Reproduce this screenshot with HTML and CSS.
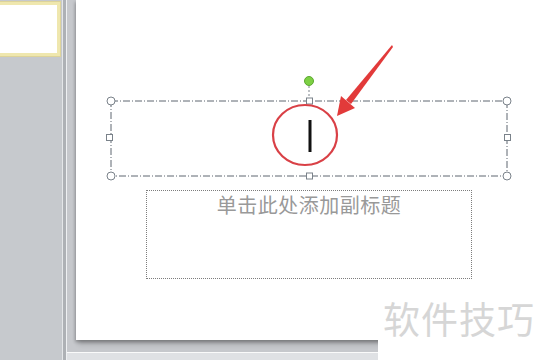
FILE: index.html
```html
<!DOCTYPE html>
<html lang="zh">
<head>
<meta charset="utf-8">
<link rel="stylesheet" href="styles.css">
</head>
<body>
<div class="app">
  <aside class="thumbs">
    <div class="thumb"></div>
  </aside>
  <div class="splitter"></div>
  <main class="editor">
    <section class="slide">
      <div class="subtitle-box">单击此处添加副标题</div>
    </section>
    <div class="gap"></div>
    <div class="notes-edge"></div>
  </main>
</div>
<svg class="overlay" width="540" height="360" viewBox="0 0 540 360">
  <rect x="111" y="101" width="396" height="75" fill="none" stroke="#5f6770" stroke-width="1" stroke-dasharray="7 2 1 2"/>
  <line x1="309" y1="86" x2="309" y2="98" stroke="#7a828a" stroke-dasharray="2 2"/>
  <circle cx="309" cy="81" r="4.5" fill="#7dd044" stroke="#5ca830"/>
  <g fill="#fff" stroke="#7a828a">
    <circle cx="111" cy="101" r="4"/>
    <circle cx="507" cy="101" r="4"/>
    <circle cx="111" cy="176" r="4"/>
    <circle cx="507" cy="176" r="4"/>
    <rect x="106.5" y="134.5" width="6" height="6"/>
    <rect x="504.5" y="134.5" width="6" height="6"/>
    <rect x="306.5" y="98" width="6" height="6"/>
    <rect x="306.5" y="173" width="6" height="6"/>
  </g>
  <rect x="308.5" y="120" width="3" height="32" fill="#111"/>
  <ellipse cx="305" cy="135" rx="32" ry="30" fill="none" stroke="#d94046" stroke-width="2.2"/>
  <polygon points="392,45 393,47 351,104 346,100" fill="#e23a3a"/>
  <polygon points="337,116 341,96 355,108" fill="#e23a3a"/>
</svg>
<div class="watermark">软件技巧</div>
</body>
</html>
```
FILE: styles.css
```css
html, body {
  margin: 0;
  padding: 0;
  width: 540px;
  height: 360px;
  overflow: hidden;
  background: #c5c7cb;
  font-family: "Noto Sans CJK SC", "Noto Sans", sans-serif;
}
.app {
  display: flex;
  width: 540px;
  height: 360px;
  position: relative;
  overflow: hidden;
}
.thumbs {
  flex: none;
  width: 63px;
  box-sizing: border-box;
  background: #c6c9cd;
  border-right: 1px solid #e4e6e8;
  padding-top: 2px;
  overflow: hidden;
}
.thumb {
  margin-left: -4px;
  width: 58px;
  height: 48px;
  background: #fff;
  border: 3px solid #efe7ae;
  box-shadow: 0 0 0 1px #ddd39a;
}
.splitter {
  width: 3px;
  flex: none;
  background: #aeb1b5;
}
.editor {
  flex: 1;
  display: flex;
  flex-direction: column;
  border-left: 1px solid #eef0f2;
  background: #c6c8cc;
  min-width: 0;
  overflow: hidden;
}
.slide {
  position: relative;
  margin-left: 9px;
  width: 470px;
  height: 340px;
  flex: none;
  background: #fff;
  box-shadow: -1px 2px 3px rgba(0,0,0,0.25), 2px 4px 5px rgba(0,0,0,0.2);
}
.subtitle-box {
  position: absolute;
  left: 70px;
  top: 190px;
  width: 326px;
  height: 89px;
  box-sizing: border-box;
  border: 1px dotted #7d7d7d;
  text-align: center;
  color: #999;
  font-size: 20px;
  line-height: 28px;
  letter-spacing: 0.5px;
}
.gap {
  height: 12px;
  flex: none;
}
.notes-edge {
  flex: 1;
  border-top: 1px solid #fafafa;
  background: #dfe1e4;
}
.overlay {
  position: absolute;
  left: 0;
  top: 0;
  pointer-events: none;
}
.watermark {
  position: absolute;
  left: 378px;
  top: 288px;
  width: 162px;
  height: 72px;
  background: #fff;
  color: #d6d6d6;
  font-size: 37px;
  line-height: 60px;
  padding-left: 5px;
  box-sizing: border-box;
  letter-spacing: 1px;
}
```
